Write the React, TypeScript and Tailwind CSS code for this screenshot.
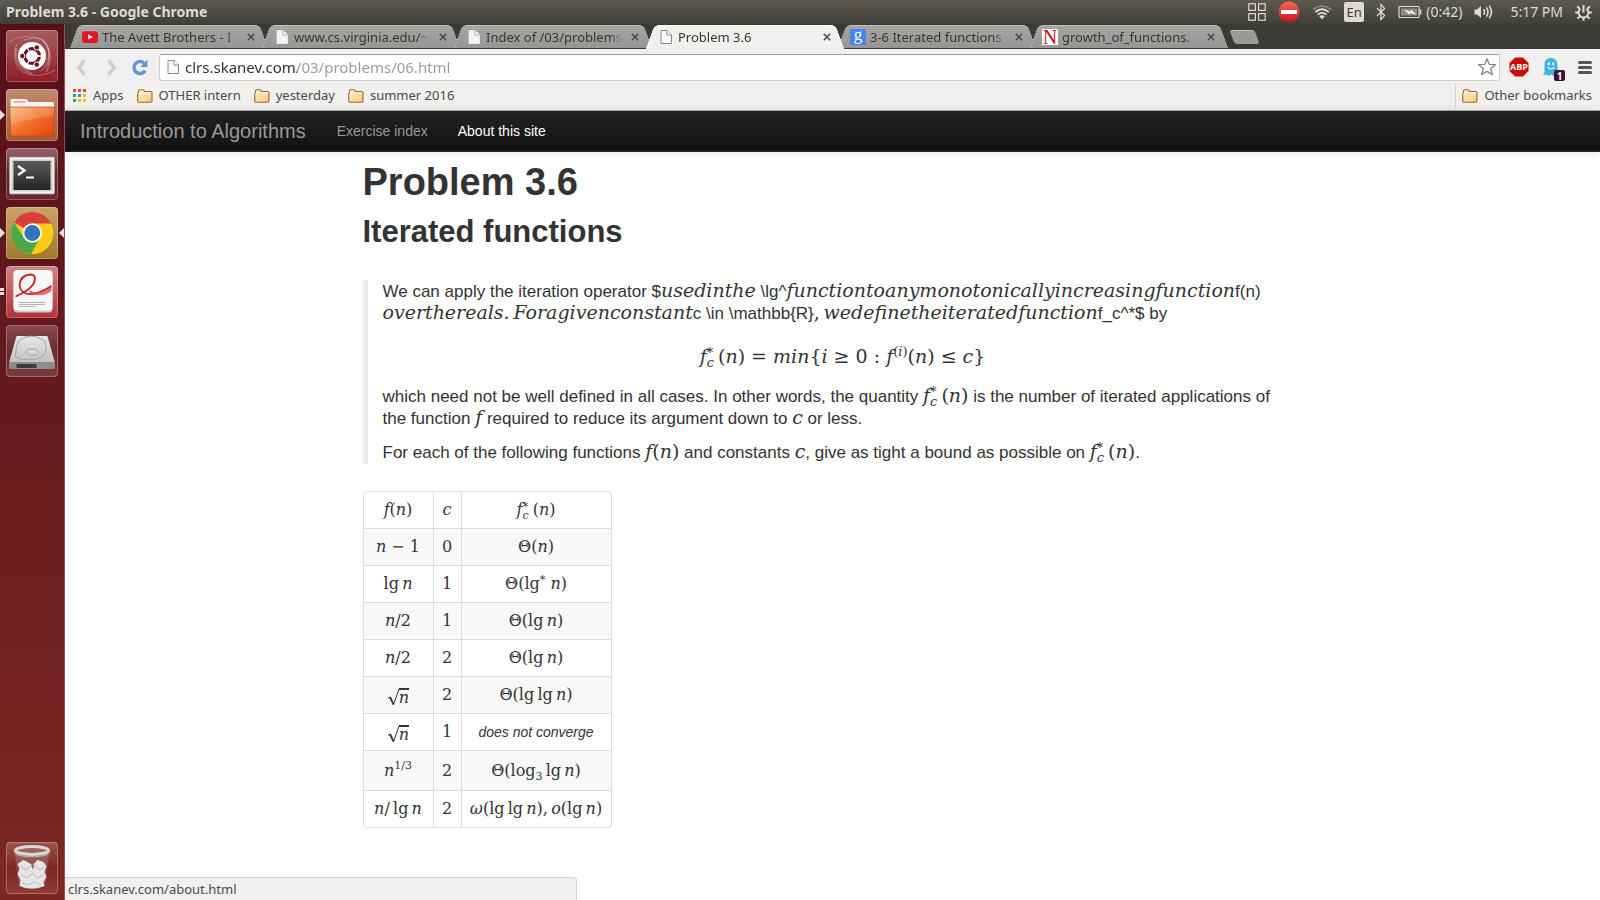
import type { ReactNode } from "react";

/* ---------- math typesetting helpers ---------- */

const THIN = "\u2009";

function V({ children }: { children: ReactNode }) {
  return <i className="italic">{children}</i>;
}

function Tex({ children }: { children: ReactNode }) {
  return (
    <span className="whitespace-nowrap font-['DejaVu_Serif',serif] text-[19px] leading-none">
      {children}
    </span>
  );
}

function Cell({ children }: { children: ReactNode }) {
  return (
    <span className="whitespace-nowrap font-['DejaVu_Serif',serif] text-[16px] leading-5">
      {children}
    </span>
  );
}

function FStar({ small = false }: { small?: boolean }) {
  return (
    <>
      <V>f</V>
      <span
        className={
          small
            ? "inline-flex flex-col pr-1 align-middle text-[11px] leading-[9px]"
            : "inline-flex flex-col pr-1 align-middle text-[13px] leading-[10px]"
        }
      >
        <span>*</span>
        <V>c</V>
      </span>
      (<V>n</V>)
    </>
  );
}

function Sqrt() {
  return (
    <span className="inline-flex items-end align-middle">
      <svg width="12" height="20" viewBox="0 0 12 20" fill="none" stroke="#333">
        <path d="M1 12.5 L3 11" strokeWidth="1" />
        <path d="M3 11 L6.5 18.5" strokeWidth="1.8" />
        <path d="M6.5 18.8 L12 3" strokeWidth="1" />
      </svg>
      <span className="border-t-2 border-[#333] leading-4">
        <V>n</V>
      </span>
    </span>
  );
}

/* ---------- browser icons ---------- */

function PageIcon({ filled = false }: { filled?: boolean }) {
  return (
    <svg width="16" height="16" viewBox="0 0 16 16" className="shrink-0">
      <path
        d="M3 1.5 H9 L13.5 6 V14.5 H3 Z"
        fill={filled ? "#f4f4f4" : "#fbfbfb"}
        stroke={filled ? "#e6e6e6" : "#8a8a8a"}
      />
      <path d="M9 1.5 V6 H13.5" fill="#fff" stroke={filled ? "#aaa" : "#8a8a8a"} />
    </svg>
  );
}

function FolderIcon() {
  return (
    <svg width="16" height="14" viewBox="0 0 16 14" className="shrink-0">
      <defs>
        <linearGradient id="bookmarkFolder" x1="0" y1="0" x2="1" y2="1">
          <stop offset="0" stopColor="#fdf0cf" />
          <stop offset="1" stopColor="#f8c877" />
        </linearGradient>
      </defs>
      <path
        d="M1.5 3.5 V2 Q1.5 .8 2.8 .8 H6 Q7.2 .8 7.4 2.5 H13.6 Q15 2.5 15 4 V12 Q15 13.2 13.8 13.2 H1.8 Q.7 13.2 .7 12 V4.4 Z"
        fill="url(#bookmarkFolder)"
        stroke="#98693a"
        strokeWidth="1.1"
      />
      <path d="M1.6 4.2 H14" stroke="#fff6de" />
    </svg>
  );
}

function YouTubeIcon() {
  return (
    <svg width="16" height="16" viewBox="0 0 16 16" className="shrink-0">
      <rect x="0" y="2.2" width="16" height="11.8" rx="3" fill="#e0161f" />
      <path d="M6.2 5.6 L11 8.1 L6.2 10.6 Z" fill="#fff" />
    </svg>
  );
}

function GoogleIcon() {
  return (
    <span className="flex size-4 shrink-0 items-center justify-center rounded-xs bg-[#4285f4] pb-1 font-['Liberation_Serif',serif] text-[17px] leading-none text-white">
      g
    </span>
  );
}

function NIcon() {
  return (
    <span className="flex size-4 shrink-0 items-center justify-center bg-white font-['Liberation_Serif',serif] text-[20px] leading-none text-[#c8101a]">
      N
    </span>
  );
}

type TabInfo = { title: string; icon: ReactNode; active?: boolean };

const TABS: TabInfo[] = [
  { title: "The Avett Brothers - I", icon: <YouTubeIcon /> },
  { title: "www.cs.virginia.edu/~", icon: <PageIcon filled /> },
  { title: "Index of /03/problems", icon: <PageIcon filled /> },
  { title: "Problem 3.6", icon: <PageIcon />, active: true },
  { title: "3-6 Iterated functions", icon: <GoogleIcon /> },
  { title: "growth_of_functions.", icon: <NIcon /> },
];

function Tab({ title, icon, active }: TabInfo) {
  const half = active
    ? "absolute inset-y-0 border-t border-white bg-[#f1f0ee]"
    : "absolute inset-y-0 border-t border-[#c3c2c0] bg-linear-to-b from-[#a6a5a3] to-[#979694]";
  return (
    <div
      role="tab"
      aria-selected={!!active}
      className={
        active
          ? "relative z-10 flex h-6 w-48 items-center gap-1 pr-[3px] pl-3"
          : "relative flex h-[23px] w-48 items-center gap-1 pr-[3px] pl-3"
      }
    >
      <span className={`${half} right-1/2 left-1 -skew-x-[20deg] rounded-tl-[5px] border-l`} />
      <span className={`${half} -right-0.5 left-1/2 skew-x-[20deg] rounded-tr-[5px] border-r`} />
      <span className={`${half} inset-x-8`} />
      <span className="relative flex min-w-0 flex-1 items-center gap-1">
        {icon}
        <span className="flex-1 overflow-hidden mask-r-from-90% text-[13px] leading-5 whitespace-nowrap text-[#3a362c]">
          {title}
        </span>
      </span>
      <button aria-label={`Close ${title}`} className="relative flex size-4 items-center justify-center">
        <svg width="8" height="8" viewBox="0 0 8 8" stroke="#4c4c4a" strokeWidth="1.6">
          <path d="M.8 .8 L7.2 7.2 M7.2 .8 L.8 7.2" />
        </svg>
      </button>
    </div>
  );
}

function TabStrip() {
  return (
    <div role="tablist" className="flex h-[25px] items-start bg-[#3c3b37] pt-px pl-[5px]">
      {TABS.map((t) => (
        <Tab key={t.title} {...t} />
      ))}
      <button
        aria-label="New tab"
        className="mt-[5px] ml-2.5 h-[14px] w-[25px] skew-x-[20deg] rounded-[3px] border-t border-[#bbb] bg-[#9b9a98]"
      />
    </div>
  );
}

function Toolbar() {
  return (
    <div className="flex h-9 items-center bg-[#f1f0ee] pr-2">
      <button aria-label="Back" className="ml-2.5 flex w-3 justify-center">
        <svg width="10" height="17" viewBox="0 0 10 17" fill="none" stroke="#cfcdca" strokeWidth="3.4">
          <path d="M8.5 1 L3 8.5 L8.5 16" />
        </svg>
      </button>
      <button aria-label="Forward" className="ml-[19px] flex w-3 justify-center">
        <svg width="10" height="17" viewBox="0 0 10 17" fill="none" stroke="#cfcdca" strokeWidth="3.4">
          <path d="M1.5 1 L7 8.5 L1.5 16" />
        </svg>
      </button>
      <button aria-label="Reload" className="ml-3.5 flex w-4">
        <svg width="16" height="17" viewBox="0 0 16 17">
          <path
            d="M13.2 11.6 A6 6 0 1 1 12 4"
            fill="none"
            stroke="#5f97d3"
            strokeWidth="3.4"
          />
          <path d="M15.5 .6 V8 H8.2 Z" fill="#5f97d3" />
        </svg>
      </button>
      <div className="ml-[11px] flex h-[27px] flex-1 items-center gap-1 rounded-[3px] border border-[#d0cecb] border-t-[#9b9a98] bg-white pr-0.5 pl-[5px]">
        <PageIcon />
        <input
          aria-label="Address"
          defaultValue="clrs.skanev.com/03/problems/06.html"
          spellCheck={false}
          className="min-w-0 flex-1 bg-[linear-gradient(to_right,#2e2e2e_112px,#999_112px)] bg-clip-text text-[15px] text-transparent outline-none"
        />
        <svg width="20" height="20" viewBox="0 0 20 20" fill="#fff" stroke="#858585" strokeWidth="1.3">
          <path
            d="M10 1.8 L12.3 7.4 L18.4 7.7 L13.7 11.6 L15.4 17.7 L10 14.4 L4.6 17.7 L6.3 11.6 L1.6 7.7 L7.7 7.4 Z"
            strokeLinejoin="round"
          />
        </svg>
      </div>
      <button aria-label="Adblock Plus" className="ml-[9px]">
        <svg width="20" height="20" viewBox="0 0 20 20">
          <path d="M6 .5 H14 L19.5 6 V14 L14 19.5 H6 L.5 14 V6 Z" fill="#cc0a0a" />
          <text
            x="10"
            y="13.3"
            fontSize="9"
            fontWeight="bold"
            fontFamily="Open Sans, sans-serif"
            fill="#fff"
            textAnchor="middle"
          >
            ABP
          </text>
        </svg>
      </button>
      <button aria-label="Ghostery" className="relative ml-3">
        <svg width="20" height="20" viewBox="0 0 20 20">
          <path
            d="M3.5 8 Q3.5 1 10 1 Q16.3 1 16.5 8 V15 L18 18 L14.5 17.5 L12.5 19 L10 17.6 L7.5 19 L5.6 17.5 L2 18 L3.5 15 Z"
            fill="#3fb3e6"
          />
          <ellipse cx="7.8" cy="6.8" rx="1.1" ry="1.7" fill="#fff" />
          <ellipse cx="12.2" cy="6.8" rx="1.1" ry="1.7" fill="#fff" />
          <path d="M6.5 10 Q10 14 13.5 10" fill="none" stroke="#fff" strokeWidth="1.1" />
        </svg>
        <span className="absolute -right-1 -bottom-1 flex h-[11px] w-[11px] items-center justify-center rounded-xs bg-[#3a1138] text-[10px] leading-none font-bold text-white">
          1
        </span>
      </button>
      <button aria-label="Menu" className="ml-[17px] flex w-[14px] flex-col gap-[2px]">
        <span className="h-[3px] rounded-full bg-[#555]" />
        <span className="h-[3px] rounded-full bg-[#555]" />
        <span className="h-[3px] rounded-full bg-[#555]" />
      </button>
    </div>
  );
}

const APP_DOTS = [
  "bg-[#ea4335]", "bg-[#ea4335]", "bg-[#ea4335]",
  "bg-[#34a853]", "bg-[#4285f4]", "bg-[#fbbc05]",
  "bg-[#34a853]", "bg-[#fbbc05]", "bg-[#fbbc05]",
];

function BookmarkBar() {
  return (
    <nav
      aria-label="Bookmarks"
      className="flex h-[26px] items-center border-b border-[#a9a8a6] bg-[#f1f0ee] pr-2 pb-1 pl-2 text-[13px] text-[#4a4a4a]"
    >
      <a href="#apps" className="flex items-center gap-[7px]">
        <span className="grid grid-cols-3 gap-[2px]">
          {APP_DOTS.map((c, i) => (
            <span key={i} className={`size-[3px] ${c}`} />
          ))}
        </span>
        Apps
      </a>
      {["OTHER intern", "yesterday", "summer 2016"].map((b) => (
        <a key={b} href="#folder" className="ml-[13px] flex items-center gap-1.5">
          <FolderIcon />
          {b}
        </a>
      ))}
      <a href="#other" className="ml-auto flex h-6 items-center gap-1.5 border-l border-[#c9d6e2] pl-1.5">
        <FolderIcon />
        Other bookmarks
      </a>
    </nav>
  );
}

/* ---------- desktop panel ---------- */

function TopPanel() {
  return (
    <header className="flex h-6 shrink-0 items-center justify-between bg-linear-to-b from-[#5c5a50] to-[#403f3a] pr-2 pl-1.5 text-[#dfdbd2]">
      <span className="text-sm font-bold">Problem 3.6 - Google Chrome</span>
      <div className="flex items-center gap-3 text-sm">
        <svg width="18" height="18" viewBox="0 0 18 18" fill="none" stroke="#dfdbd2" strokeWidth="1.2">
          <rect x=".8" y=".8" width="6.6" height="6.6" />
          <rect x="10.6" y=".8" width="6.6" height="6.6" />
          <rect x=".8" y="10.6" width="6.6" height="6.6" />
          <rect x="10.6" y="10.6" width="6.6" height="6.6" />
        </svg>
        <svg width="22" height="22" viewBox="0 0 22 22">
          <defs>
            <linearGradient id="stop" x1="0" y1="0" x2="0" y2="1">
              <stop offset="0" stopColor="#ee6a5c" />
              <stop offset="1" stopColor="#c4161c" />
            </linearGradient>
          </defs>
          <circle cx="11" cy="11" r="10.5" fill="url(#stop)" />
          <rect x="3" y="9" width="16" height="4" fill="#fff" />
        </svg>
        <svg width="20" height="16" viewBox="0 0 20 16" fill="none" stroke="#dfdbd2" strokeWidth="1.7">
          <path d="M1 5.5 Q10 -1.5 19 5.5" stroke="#8e8b83" />
          <path d="M3.2 8 Q10 2.5 16.8 8" />
          <path d="M5.6 10.6 Q10 7 14.4 10.6" />
          <path d="M7.2 12.2 L10 15.4 L12.8 12.2 Q10 10.4 7.2 12.2 Z" fill="#dfdbd2" stroke="none" />
        </svg>
        <span className="flex h-5 w-5 items-center justify-center rounded-xs bg-[#dfdbd2] text-[13px] text-[#3c3b37]">
          En
        </span>
        <svg width="10" height="18" viewBox="0 0 10 18" fill="none" stroke="#dfdbd2" strokeWidth="1.3">
          <path d="M1 5 L8.6 12.6 L5 16.4 V1.6 L8.6 5.4 L1 13" />
        </svg>
        <span className="flex items-center gap-1">
          <svg width="24" height="14" viewBox="0 0 24 14">
            <rect x="1" y="1.5" width="20" height="11" rx="1" fill="none" stroke="#dfdbd2" strokeWidth="1.2" />
            <rect x="3" y="3.5" width="16" height="7" fill="#8e8b83" />
            <rect x="21.5" y="4.5" width="1.8" height="5" fill="#dfdbd2" />
            <path d="M6 4.5 L13 7 L12.6 4.5 L18.5 9.8 L11.5 7.8 L12 10 Z" fill="#fff" />
          </svg>
          (0:42)
        </span>
        <svg width="20" height="16" viewBox="0 0 20 16" fill="none" stroke="#dfdbd2" strokeWidth="1.6">
          <path d="M.5 5.5 H3 L7 2 V14 L3 10.5 H.5 Z" fill="#dfdbd2" stroke="none" />
          <path d="M9.6 5.2 Q11.4 8 9.6 10.8 M12.4 3.4 Q15.4 8 12.4 12.6 M15.2 1.6 Q19.6 8 15.2 14.4" />
        </svg>
        <span className="pl-1">5:17 PM</span>
        <svg width="17" height="17" viewBox="0 0 17 17" fill="none" stroke="#dfdbd2">
          <path d="M5.4 4.6 A5 5 0 1 0 11.6 4.6" strokeWidth="2" />
          <path d="M8.5 1 V8.5" strokeWidth="2" />
          <path
            d="M2.2 2.2 L4.6 4.6 M14.8 2.2 L12.4 4.6 M.2 8.5 H3 M14 8.5 H16.8 M2.4 14.6 L4.6 12.4 M14.6 14.6 L12.4 12.4 M8.5 13.6 V16.8"
            strokeWidth="2"
          />
        </svg>
      </div>
    </header>
  );
}

/* ---------- launcher ---------- */

function UbuntuIcon() {
  return (
    <svg width="52" height="52" viewBox="0 0 51 52">
      <g fill="none" stroke="#fff" strokeWidth="1">
        <path d="M2 12 Q20 2 36 10 Q48 20 38 36" opacity=".25" />
        <path d="M49 40 Q32 50 16 42 Q4 32 10 14" opacity=".3" />
        <path d="M36 10 Q48 22 40 42" opacity=".25" strokeWidth="2" />
        <path d="M10 18 Q6 36 26 44" opacity=".25" strokeWidth="2" />
        <path d="M18 10 Q40 2 43 24 Q43 36 34 41" opacity=".35" />
      </g>
      <circle cx="25.5" cy="26" r="14" fill="#fff" />
      <circle cx="25.5" cy="26" r="7.4" fill="none" stroke="#6a1420" strokeWidth="3.2" />
      <g stroke="#fff" strokeWidth="1.3">
        <path d="M25.5 26 L34.5 26 M25.5 26 L21 18.2 M25.5 26 L21 33.8" />
      </g>
      <circle cx="25.5" cy="26" r="5.6" fill="#fff" />
      <g fill="#6a1420" stroke="#fff" strokeWidth="1">
        <circle cx="15.8" cy="26" r="2.7" />
        <circle cx="30.3" cy="17.4" r="2.7" />
        <circle cx="30.3" cy="34.6" r="2.7" />
      </g>
    </svg>
  );
}

function FilesIcon() {
  return (
    <svg width="52" height="52" viewBox="0 0 51 52">
      <defs>
        <linearGradient id="files" x1="0" y1="0" x2="1" y2="1">
          <stop offset="0" stopColor="#f6b978" />
          <stop offset=".5" stopColor="#f0702c" />
          <stop offset="1" stopColor="#e8410e" />
        </linearGradient>
      </defs>
      <path d="M4 20 V11 Q4 10 5 10 H19 Q21 10 22 13 H46 Q47.5 13 47.5 15 V20 Z" fill="#f7f4f2" />
      <rect x="7" y="12" width="12" height="1.8" fill="#f3ab83" />
      <path d="M3.2 18 H48 L46.8 45 Q46.8 47 45 47 H6 Q4.3 47 4.2 45 Z" fill="url(#files)" stroke="#b8471a" strokeWidth=".7" />
      <path d="M3.5 18.4 H47.6 L47.2 26 Q24 30 4 35 Z" fill="#fff" opacity=".16" />
    </svg>
  );
}

function TerminalIcon() {
  return (
    <svg width="52" height="52" viewBox="0 0 51 52">
      <defs>
        <linearGradient id="term" x1="0" y1="0" x2="0" y2="1">
          <stop offset="0" stopColor="#5a5a5a" />
          <stop offset="1" stopColor="#242424" />
        </linearGradient>
      </defs>
      <rect x="3" y="9" width="45" height="37" rx="1" fill="#f3f3f3" stroke="#9a9a9a" strokeWidth=".8" />
      <rect x="5" y="11.5" width="41" height="32" fill="#d0d0d0" />
      <rect x="7" y="13" width="37" height="29" fill="url(#term)" />
      <path d="M11.5 18 L18 22.5 L11.5 27" fill="none" stroke="#fff" strokeWidth="2.4" />
      <rect x="19.5" y="28.5" width="8" height="2" fill="#fff" />
    </svg>
  );
}

function ChromeIcon() {
  return (
    <svg width="52" height="52" viewBox="0 0 51 52">
      <circle cx="25.8" cy="26" r="21" fill="#fbd026" />
      <path d="M25.8 26 L7.6 15.5 A21 21 0 0 1 44.6 16.8 L25.8 16.8 Z" fill="#d8403a" />
      <path d="M7.6 15.5 A21 21 0 0 0 24.8 47 L33.6 31 L25.8 26 L17.8 31 Z" fill="#4aa847" />
      <path d="M25.8 16.8 H44.6 A21 21 0 0 1 24.8 47 L33.8 30.6 Z" fill="#f9cb12" />
      <circle cx="25.8" cy="26" r="9.8" fill="#f5f3ee" />
      <circle cx="25.8" cy="26" r="7.9" fill="#3274ba" />
    </svg>
  );
}

function DocIcon() {
  return (
    <svg width="52" height="52" viewBox="0 0 51 52">
      <rect x="7" y="5.5" width="39" height="41" rx="4" fill="#c9c9c9" />
      <rect x="7" y="4" width="39" height="40.5" rx="4" fill="#f7f7f7" />
      <path
        d="M9 30.5 Q22 25 27 18 Q31 9 24 8.5 Q14 9 13 19 Q14 29 26 28 Q36 26 45 20"
        fill="none"
        stroke="#cf1c22"
        strokeWidth="1.8"
      />
      <path d="M22 24 Q34 30 45 20 V25 Q36 32 24 27.5 Z" fill="#e0484a" opacity=".8" />
      <g stroke="#b5b5b5" strokeWidth="1">
        <path d="M12 36.5 H39 M12 38.5 H39 M12 40.5 H29" />
      </g>
    </svg>
  );
}

function DriveIcon() {
  return (
    <svg width="52" height="52" viewBox="0 0 51 52">
      <defs>
        <linearGradient id="drive" x1="0" y1="0" x2="0" y2="1">
          <stop offset="0" stopColor="#e6e6e4" />
          <stop offset="1" stopColor="#b9b9b7" />
        </linearGradient>
      </defs>
      <path d="M10 11 H41 L48 36 V43 Q48 44 47 44 H4 Q3 44 3 43 V36 Z" fill="url(#drive)" />
      <path d="M3 37 H48 V43 Q48 44 47 44 H4 Q3 44 3 43 Z" fill="#8d8d8b" />
      <rect x="10" y="39" width="20" height="4" fill="#3b3b3b" />
      <path d="M12 16 Q25 6 38 16 Q44 30 30 34 Q14 36 9 32 Q9 22 12 16 Z" fill="none" stroke="#a3a3a1" />
      <ellipse cx="25.5" cy="27" rx="6" ry="3.2" fill="#d8d8d6" stroke="#a3a3a1" />
    </svg>
  );
}

function TrashIcon() {
  return (
    <svg width="52" height="52" viewBox="0 0 51 52">
      <path d="M8 10 L12.5 44 Q25 51 38.5 44 L43 10 Z" fill="#fff" opacity=".16" />
      <path
        d="M11 22 L17 18 L21 20 L26 23 L31 18 L37 20 L40 24 L38 30 L40 35 L37 40 L38 44 Q25 49 13 44 L14 38 L11 32 L13 27 Z"
        fill="#e4e4e2"
      />
      <g fill="none" stroke="#c6c6c3" strokeWidth="1.1">
        <path d="M14 24 L19 28 L24 24 M28 23 L33 28 L38 25 M15 33 L21 36 L26 31 L31 36 L37 33 M16 41 L22 43 L28 40 L34 43" />
      </g>
      <path d="M24.5 22.5 L26 23.5 L27.5 22 L26.5 28 Z" fill="#94504e" />
      <ellipse cx="25.5" cy="8.5" rx="16.5" ry="4" fill="#9d6260" stroke="#d9d9d6" strokeWidth="3" />
      <path d="M8.5 10 Q9 14.5 25.5 14.5 Q42 14.5 42.5 10" fill="none" stroke="#a9a9a6" strokeWidth="1.6" />
    </svg>
  );
}

const LAUNCHERS: { name: string; icon: ReactNode; tile: string; marks?: ReactNode }[] = [
  { name: "Dash", icon: <UbuntuIcon />, tile: "bg-linear-to-b from-[#a85a60] to-[#8c1c24]" },
  {
    name: "Files",
    icon: <FilesIcon />,
    tile: "bg-linear-to-b from-[#c08a70] to-[#a9592f]",
    marks: <span className="absolute top-[21px] -left-1.5 border-y-[5px] border-l-[5px] border-y-transparent border-l-[#e8dede]" />,
  },
  { name: "Terminal", icon: <TerminalIcon />, tile: "bg-linear-to-b from-[#96626a] via-[#6b2833] to-[#6a2430]" },
  {
    name: "Chrome",
    icon: <ChromeIcon />,
    tile: "bg-linear-to-b from-[#c9a468] to-[#9f7a2c]",
    marks: (
      <>
        <span className="absolute top-[21px] -left-1.5 border-y-[5px] border-l-[5px] border-y-transparent border-l-[#e8dede]" />
        <span className="absolute top-[21px] -right-1.5 border-y-[5px] border-r-[5px] border-y-transparent border-r-[#e8dede]" />
      </>
    ),
  },
  {
    name: "Document viewer",
    icon: <DocIcon />,
    tile: "bg-linear-to-b from-[#d08286] to-[#b03038]",
    marks: (
      <span className="absolute top-[22px] -left-1.5 h-[7px] w-1 border-y-[3px] border-[#e8dede]" />
    ),
  },
  { name: "Disk", icon: <DriveIcon />, tile: "bg-linear-to-b from-[#8a4a50] via-[#6b2830] to-[#7a3a42]" },
];

function Tile({ name, icon, tile, marks }: (typeof LAUNCHERS)[number]) {
  return (
    <button aria-label={name} className={`relative size-[52px] rounded-[4px] ${tile}`}>
      <span className="absolute inset-0 rounded-[4px] border border-white/25" />
      {icon}
      {marks}
    </button>
  );
}

function Launcher() {
  return (
    <aside className="flex w-[65px] shrink-0 flex-col gap-[7px] border-r border-[#8c5558] bg-linear-to-b from-[#56101a] to-[#7c2722] pt-1.5 pb-1.5 pl-1.5">
      {LAUNCHERS.map((l) => (
        <Tile key={l.name} {...l} />
      ))}
      <div className="mt-auto h-[52px]">
        <Tile
          name="Trash"
          icon={<TrashIcon />}
          tile="bg-linear-to-b from-[#9c5450] via-[#7f2424] to-[#8e3a38]"
        />
      </div>
    </aside>
  );
}

/* ---------- web page ---------- */

const ROWS: { f: ReactNode; c: number; bound: ReactNode; tall?: boolean }[] = [
  { f: <><V>n</V> − 1</>, c: 0, bound: <>Θ(<V>n</V>)</> },
  { f: <>lg{THIN}<V>n</V></>, c: 1, bound: <>Θ(lg<sup className="top-0 align-super text-[11px] leading-none">*</sup> <V>n</V>)</> },
  { f: <><V>n</V>/2</>, c: 1, bound: <>Θ(lg{THIN}<V>n</V>)</> },
  { f: <><V>n</V>/2</>, c: 2, bound: <>Θ(lg{THIN}<V>n</V>)</> },
  { f: <Sqrt />, c: 2, bound: <>Θ(lg{THIN}lg{THIN}<V>n</V>)</> },
  {
    f: <Sqrt />,
    c: 1,
    bound: <em className="font-['Liberation_Sans',sans-serif] text-sm">does not converge</em>,
  },
  {
    f: <><V>n</V><sup className="top-0 align-super text-[11px] leading-none">1/3</sup></>,
    c: 2,
    bound: <>Θ(log<sub className="bottom-0 align-sub text-[11px] leading-none">3</sub>{THIN}lg{THIN}<V>n</V>)</>,
    tall: true,
  },
  { f: <><V>n</V>/{THIN}lg{THIN}<V>n</V></>, c: 2, bound: <><V>ω</V>(lg{THIN}lg{THIN}<V>n</V>),{THIN}<V>o</V>(lg{THIN}<V>n</V>)</> },
];

function BoundsTable() {
  const cell = "border-t border-l border-[#ddd] p-0 text-center align-middle font-normal";
  return (
    <table className="mt-[27px] border-separate border-spacing-0 overflow-hidden rounded-[4px] border border-l-0 border-t-0 border-[#ddd]">
      <thead>
        <tr className="h-[37px]">
          <th className={`${cell} w-[70px] rounded-tl-[4px]`}><Cell><V>f</V>(<V>n</V>)</Cell></th>
          <th className={`${cell} w-7`}><Cell><V>c</V></Cell></th>
          <th className={`${cell} w-[150px] rounded-tr-[4px]`}><Cell><FStar small /></Cell></th>
        </tr>
      </thead>
      <tbody>
        {ROWS.map((r, i) => (
          <tr key={i} className={`${r.tall ? "h-10" : "h-[37px]"} ${i % 2 === 0 ? "bg-[#f9f9f9]" : "bg-white"}`}>
            <td className={cell}><Cell>{r.f}</Cell></td>
            <td className={cell}><Cell>{r.c}</Cell></td>
            <td className={`${cell} ${i === ROWS.length - 1 ? "rounded-br-[4px]" : ""}`}><Cell>{r.bound}</Cell></td>
          </tr>
        ))}
      </tbody>
    </table>
  );
}

function WebPage() {
  return (
    <div className="relative flex min-h-0 flex-1 flex-col bg-white font-['Liberation_Sans',sans-serif] text-[#333]">
      <nav className="flex h-[41px] shrink-0 items-center border-b border-[#252525] bg-linear-to-b from-[#222] to-[#111] pl-[15px] text-sm text-[#999] shadow-[0_1px_10px_rgba(0,0,0,0.1)]">
        <a href="#home" className="mr-[31px] text-xl">Introduction to Algorithms</a>
        <a href="#index" className="mr-[30px]">Exercise index</a>
        <a href="#about" className="text-white">About this site</a>
      </nav>
      <main className="mx-auto w-full max-w-[940px] pt-2.5">
        <h1 className="text-[38px] leading-10 font-bold">Problem 3.6</h1>
        <h2 className="mt-2.5 text-[31px] leading-10 font-bold">Iterated functions</h2>
        <blockquote className="mt-7 border-l-[5px] border-[#eee] pt-px pl-[15px] text-[17px] leading-[22px]">
          <p>
            We can apply the iteration operator $<Tex><V>usedinthe</V></Tex> \lg^
            <Tex><V>functiontoanymonotonicallyincreasingfunction</V></Tex>f(n)
            <br />
            <Tex><V>overthereals.{THIN}Foragivenconstant</V></Tex>c \in \mathbb{"{R}"}
            <Tex>,{THIN}<V>wedefinetheiteratedfunction</V></Tex>f_c^*$ by
          </p>
          <div className="flex h-[61px] items-center justify-center pt-0.5">
            <Tex>
              <FStar /> = <V>min</V>{"{"}<V>i</V> ≥ 0 : <V>f</V>
              <sup className="top-0 align-super text-[13px] leading-none">(<V>i</V>)</sup>(<V>n</V>) ≤ <V>c</V>{"}"}
            </Tex>
          </div>
          <p>
            which need not be well defined in all cases. In other words, the quantity <Tex><FStar /></Tex> is the
            number of iterated applications of
            <br />
            the function <Tex><V>f</V></Tex> required to reduce its argument down to <Tex><V>c</V></Tex> or less.
          </p>
          <p className="mt-3">
            For each of the following functions <Tex><V>f</V>(<V>n</V>)</Tex> and constants <Tex><V>c</V></Tex>, give
            as tight a bound as possible on <Tex><FStar /></Tex>.
          </p>
        </blockquote>
        <BoundsTable />
      </main>
      <div className="absolute bottom-0 left-0 h-[23px] w-1/3 rounded-tr-[4px] border-t border-r border-[#d4d3d1] bg-[#f1f0ee] pl-[3px] font-['Noto_Sans',sans-serif] text-[13px] leading-[22px] text-[#4a4a4a]">
        clrs.skanev.com/about.html
      </div>
    </div>
  );
}

export default function App() {
  return (
    <div className="flex h-screen flex-col overflow-hidden font-['Noto_Sans',sans-serif]">
      <TopPanel />
      <div className="flex min-h-0 flex-1">
        <Launcher />
        <div className="flex min-w-0 flex-1 flex-col">
          <TabStrip />
          <Toolbar />
          <BookmarkBar />
          <WebPage />
        </div>
      </div>
    </div>
  );
}
